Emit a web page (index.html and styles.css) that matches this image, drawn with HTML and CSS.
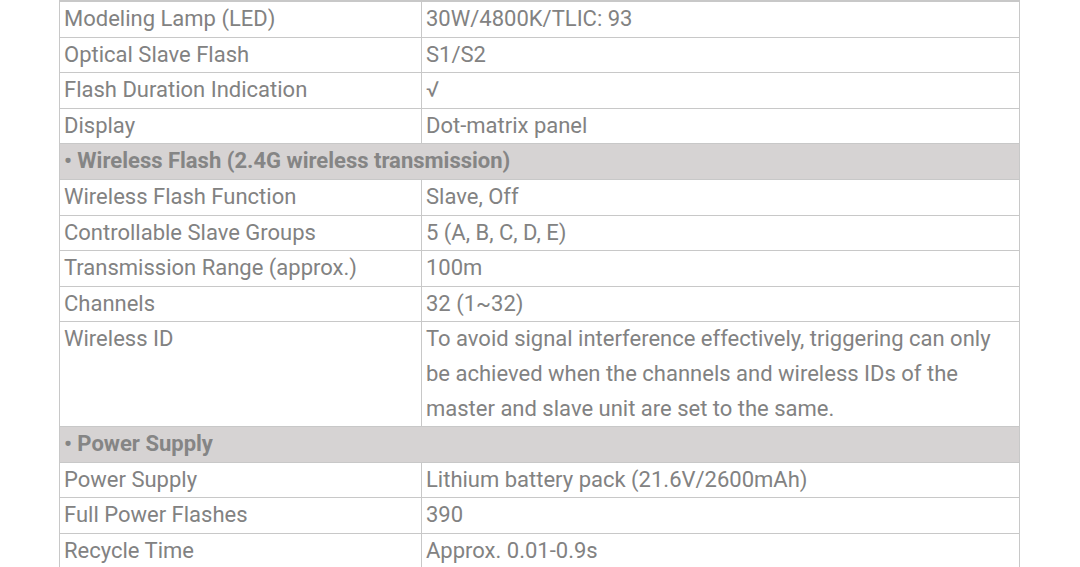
FILE: index.html
```html
<!DOCTYPE html>
<html>
<head>
<meta charset="utf-8">
<link rel="stylesheet" href="styles.css">
</head>
<body>
<table class="spec">
  <colgroup><col class="c1"><col class="c2"></colgroup>
  <tr><td>Modeling Lamp (LED)</td><td>30W/4800K/TLIC: 93</td></tr>
  <tr><td>Optical Slave Flash</td><td>S1/S2</td></tr>
  <tr><td>Flash Duration Indication</td><td>√</td></tr>
  <tr><td>Display</td><td>Dot-matrix panel</td></tr>
  <tr class="head"><td colspan="2">• Wireless Flash (2.4G wireless transmission)</td></tr>
  <tr><td>Wireless Flash Function</td><td>Slave, Off</td></tr>
  <tr><td>Controllable Slave Groups</td><td>5 (A, B, C, D, E)</td></tr>
  <tr><td>Transmission Range (approx.)</td><td>100m</td></tr>
  <tr><td>Channels</td><td>32 (1~32)</td></tr>
  <tr><td>Wireless ID</td><td>To avoid signal interference effectively, triggering can only be achieved when the channels and wireless IDs of the master and slave unit are set to the same.</td></tr>
  <tr class="head"><td colspan="2">• Power Supply</td></tr>
  <tr><td>Power Supply</td><td>Lithium battery pack (21.6V/2600mAh)</td></tr>
  <tr><td>Full Power Flashes</td><td>390</td></tr>
  <tr><td>Recycle Time</td><td>Approx. 0.01-0.9s</td></tr>
</table>
</body>
</html>
```
FILE: styles.css
```css
html, body {
  margin: 0;
  padding: 0;
  background: #ffffff;
}
body {
  font-family: Roboto, "Liberation Sans", sans-serif;
  color: #828282;
  overflow: hidden;
}
.spec {
  margin-left: 59px;
  width: 961px;
  border-collapse: collapse;
  table-layout: fixed;
  font-size: 22px;
  border-top: 2px solid #c8c8c8;
}
.c1 { width: 362px; }
.spec td {
  border: 1px solid #c8c8c8;
  padding: 0 4px;
  line-height: 34.6px;
  vertical-align: top;
}
.spec tr.head td {
  background: #d6d3d3;
  font-weight: bold;
  color: #858585;
}
```
